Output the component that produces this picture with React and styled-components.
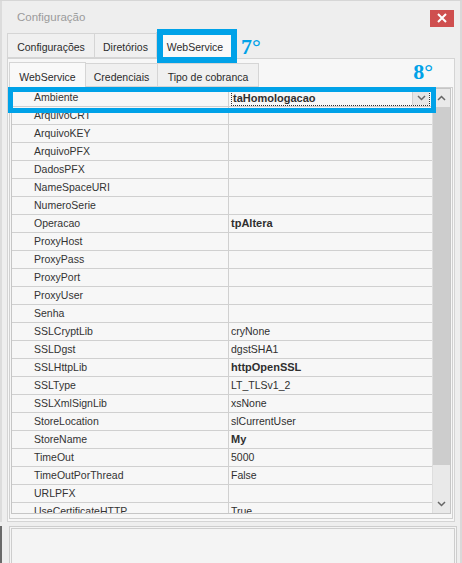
import React from "react";
import styled, { createGlobalStyle } from "styled-components";

const accent = "#00a2e8";

const GlobalStyle = createGlobalStyle`
  html, body {
    margin: 0;
    padding: 0;
    background: #eeeeee;
  }
  * {
    box-sizing: border-box;
  }
`;

const Window = styled.div`
  width: 462px;
  height: 563px;
  overflow: hidden;
  display: flex;
  flex-direction: column;
  background: #eeeeee;
  border-top: 1px solid #d6d6d6;
  border-right: 2px solid #d9d9d9;
  font-family: "Liberation Sans", Arial, sans-serif;
  font-size: 10.5px;
  color: #333;
`;

const TitleBar = styled.div`
  height: 32px;
  flex-shrink: 0;
  display: flex;
  align-items: center;
  justify-content: space-between;
  padding: 0 6px 0 15px;
  border-left: 2px solid #dcdcdc;
`;

const Title = styled.span`
  font-size: 11.5px;
  color: #9b9b9b;
`;

const CloseButton = styled.button`
  width: 24px;
  height: 17px;
  margin-top: 2px;
  padding: 0;
  border: none;
  background: #cf4f4f;
  display: flex;
  align-items: center;
  justify-content: center;
`;

const Main = styled.div`
  height: 489px;
  flex-shrink: 0;
  display: flex;
  flex-direction: column;
  padding: 0 5px 0 5px;
  border-left: 2px solid #dcdcdc;
`;

const TabStrip = styled.div`
  height: ${(p) => p.$h}px;
  display: flex;
  align-items: flex-end;
  flex-shrink: 0;
`;

const Tab = styled.div`
  position: relative;
  z-index: ${(p) => (p.$active ? 2 : 1)};
  width: ${(p) => p.$w}px;
  height: ${(p) => p.$h}px;
  margin-right: -1px;
  margin-bottom: ${(p) => (p.$active ? -1 : 0)}px;
  padding-top: ${(p) => (p.$active ? 2 : 3)}px;
  display: flex;
  align-items: center;
  justify-content: center;
  white-space: nowrap;
  color: #2b2b2b;
  background: ${(p) => (p.$active ? "#f9f9f9" : "#f0f0f0")};
  border: 1px solid #d5d5d5;
  border-bottom: ${(p) => (p.$active ? "none" : "1px solid #d5d5d5")};
`;

const TabMarker = styled.span`
  position: absolute;
  top: -4px;
  left: 0;
  right: -4px;
  bottom: -4px;
  border: 6px solid ${accent};
  pointer-events: none;
`;

const StepLabel = styled.span`
  align-self: center;
  margin: ${(p) => p.$margin};
  font-family: "Liberation Serif", "Times New Roman", serif;
  font-weight: bold;
  font-size: 22px;
  line-height: 22px;
  color: ${accent};
`;

const OuterPanel = styled.div`
  flex: 1;
  min-height: 0;
  display: flex;
  flex-direction: column;
  padding: 2px 1px 2px 1px;
  background: #f7f7f7;
  border: 1px solid #d4d4d4;
`;

const InnerPanel = styled.div`
  position: relative;
  flex: 1;
  min-height: 0;
  display: flex;
  padding: 0 1px 4px 1px;
  background: #f7f7f7;
  border: 1px solid #d0d0d0;
`;

const RowMarker = styled.span`
  position: absolute;
  top: -1px;
  left: -2px;
  width: 428px;
  height: 26px;
  border: 5px solid ${accent};
  pointer-events: none;
  z-index: 3;
`;

const Grid = styled.div`
  flex: 1;
  display: flex;
  overflow: hidden;
  border: 1px solid #c6c6c6;
  background: #f7f7f7;
`;

const GridBody = styled.div`
  flex: 1;
  overflow: hidden;
`;

const Row = styled.div`
  height: 18px;
  display: grid;
  grid-template-columns: 217px 1fr;
  border-bottom: 1px solid #d0d0d0;
  line-height: 17px;
`;

const NameCell = styled.div`
  padding-left: 22px;
  border-right: 1px solid #d0d0d0;
  white-space: nowrap;
  overflow: hidden;
  color: #333;
`;

const ValueCell = styled.div`
  position: relative;
  padding-left: 2px;
  white-space: nowrap;
  overflow: hidden;
  color: #2f2f2f;
  font-weight: ${(p) => (p.$bold ? "bold" : "normal")};
  font-size: ${(p) => (p.$bold ? "11px" : "10.5px")};
`;

const EditBox = styled.div`
  height: 16px;
  margin: 1px 2px 0 0;
  display: flex;
  align-items: center;
  justify-content: space-between;
  border: 1px dotted #333;
  padding-left: 1px;
  line-height: 14px;
`;

const DropButton = styled.span`
  width: 17px;
  height: 14px;
  display: flex;
  align-items: center;
  justify-content: center;
  background: #e6e6e6;
  border-left: 1px solid #d0d0d0;
`;

const ScrollBar = styled.div`
  width: 18px;
  display: flex;
  flex-direction: column;
  background: #e9e9e9;
  border-left: 1px solid #dedede;
`;

const ScrollArrow = styled.div`
  height: 18px;
  flex-shrink: 0;
  display: flex;
  align-items: center;
  justify-content: center;
`;

const ScrollThumb = styled.div`
  height: 358px;
  flex-shrink: 0;
  background: #cdcdcd;
`;

const ScrollTrack = styled.div`
  flex: 1;
`;

const Bottom = styled.div`
  flex: 1;
  margin-top: 4px;
  display: flex;
  padding: 0 3px 0 7px;
  border-left: 2px solid #6a6a6a;
`;

const Memo = styled.div`
  flex: 1;
  background: #f4f4f4;
  border: 3px double #cdcdcd;
  border-bottom: none;
`;

const Chevron = ({ up }) => (
  <svg width="9" height="6" viewBox="0 0 9 6">
    <polyline
      points={up ? "1,5 4.5,1.5 8,5" : "1,1 4.5,4.5 8,1"}
      fill="none"
      stroke="#666"
      strokeWidth="1.5"
    />
  </svg>
);

const rows = [
  ["ArquivoCRT", ""],
  ["ArquivoKEY", ""],
  ["ArquivoPFX", ""],
  ["DadosPFX", ""],
  ["NameSpaceURI", ""],
  ["NumeroSerie", ""],
  ["Operacao", "tpAltera", true],
  ["ProxyHost", ""],
  ["ProxyPass", ""],
  ["ProxyPort", ""],
  ["ProxyUser", ""],
  ["Senha", ""],
  ["SSLCryptLib", "cryNone"],
  ["SSLDgst", "dgstSHA1"],
  ["SSLHttpLib", "httpOpenSSL", true],
  ["SSLType", "LT_TLSv1_2"],
  ["SSLXmlSignLib", "xsNone"],
  ["StoreLocation", "slCurrentUser"],
  ["StoreName", "My", true],
  ["TimeOut", "5000"],
  ["TimeOutPorThread", "False"],
  ["URLPFX", ""],
  ["UseCertificateHTTP", "True"],
];

export default function App() {
  return (
    <>
      <GlobalStyle />
      <Window>
        <TitleBar>
          <Title>Configuração</Title>
          <CloseButton aria-label="Fechar">
            <svg width="10" height="10" viewBox="0 0 10 10">
              <path d="M1 1 L9 9 M9 1 L1 9" stroke="#fff" strokeWidth="2" />
            </svg>
          </CloseButton>
        </TitleBar>
        <Main>
          <TabStrip $h={25}>
            <Tab $w={88} $h={25}>Configurações</Tab>
            <Tab $w={63} $h={25}>Diretórios</Tab>
            <Tab $w={78} $h={27} $active>
              WebService
              <TabMarker />
            </Tab>
            <StepLabel $margin="2px 0 0 8px">7°</StepLabel>
          </TabStrip>
          <OuterPanel>
            <TabStrip $h={26}>
              <Tab $w={77} $h={26} $active>WebService</Tab>
              <Tab $w={73} $h={24}>Credenciais</Tab>
              <Tab $w={102} $h={24}>Tipo de cobranca</Tab>
              <StepLabel $margin="0 20px 4px auto">8°</StepLabel>
            </TabStrip>
            <InnerPanel>
              <Grid>
                <GridBody>
                  <Row>
                    <NameCell>Ambiente</NameCell>
                    <ValueCell $bold>
                      <EditBox>
                        taHomologacao
                        <DropButton>
                          <Chevron />
                        </DropButton>
                      </EditBox>
                    </ValueCell>
                  </Row>
                  {rows.map(([name, value, bold]) => (
                    <Row key={name}>
                      <NameCell>{name}</NameCell>
                      <ValueCell $bold={bold}>{value}</ValueCell>
                    </Row>
                  ))}
                </GridBody>
                <ScrollBar>
                  <ScrollArrow>
                    <Chevron up />
                  </ScrollArrow>
                  <ScrollThumb />
                  <ScrollTrack />
                  <ScrollArrow>
                    <Chevron />
                  </ScrollArrow>
                </ScrollBar>
              </Grid>
              <RowMarker />
            </InnerPanel>
          </OuterPanel>
        </Main>
        <Bottom>
          <Memo />
        </Bottom>
      </Window>
    </>
  );
}
